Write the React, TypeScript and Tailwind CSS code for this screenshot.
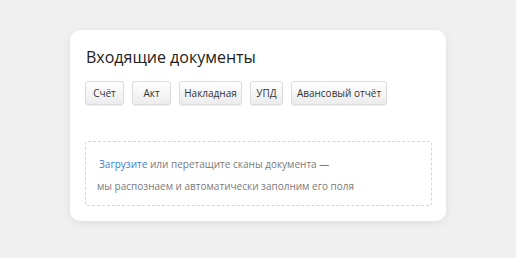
export default function App() {
  const docs: [string, string][] = [
    ["Счёт", "w-[39px]"],
    ["Акт", "w-[39px]"],
    ["Накладная", "w-[63px]"],
    ["УПД", "w-[33px]"],
    ["Авансовый отчёт", "w-[96px]"],
  ];
  return (
    <div className="w-[516px] h-[258px] bg-[#f0f0f0] pt-[30px] pl-[70px]" style={{ fontFamily: '"Open Sans", sans-serif' }}>
      <div className="w-[376px] h-[191px] bg-white rounded-[10px] shadow-[0_2px_8px_rgba(0,0,0,0.08)] pt-[14px] pl-[15px] pr-[14px]">
        <h1 className="text-[16px] leading-[26px] text-[#222] pl-px">Входящие документы</h1>
        <div className="flex gap-[8px] mt-[11px]">
          {docs.map(([d, w]) => (
            <button
              key={d}
              className={`${w} h-[24px] whitespace-nowrap text-[10px] text-[#333] rounded-[3px] border border-[#dcdcdc] bg-gradient-to-b from-white to-[#ececec] shadow-[0_1px_1px_rgba(0,0,0,0.08)]`}
            >
              {d}
            </button>
          ))}
        </div>
        <div className="mt-[36px] h-[65px] border border-dashed border-[#d5d5d5] rounded-[3px] pl-[11px] pt-[11px] text-[10px] text-[#7a7a7a] leading-[22px]">
          <div className="pl-[2px]">
            <span className="text-[#3b7dd8]">Загрузите</span> или перетащите сканы документа —
          </div>
          <div>мы распознаем и автоматически заполним его поля</div>
        </div>
      </div>
    </div>
  );
}
